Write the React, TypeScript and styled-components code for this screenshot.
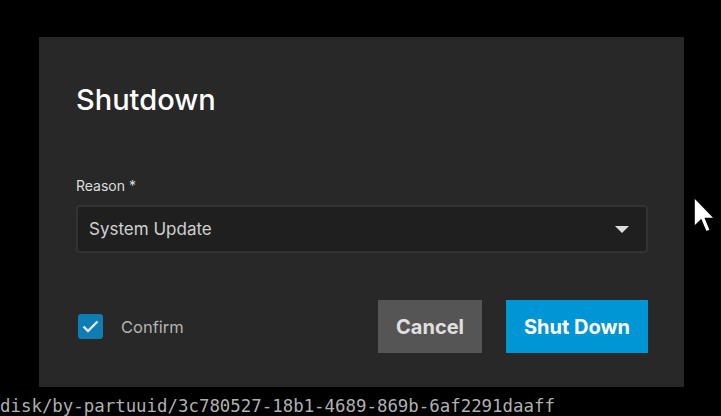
import React from "react";
import styled, { createGlobalStyle } from "styled-components";

const Global = createGlobalStyle`
  html, body { margin: 0; padding: 0; background: #000; }
  body { font-family: Inter, "Noto Sans", sans-serif; overflow: hidden; }
`;

const Screen = styled.div`
  position: relative;
  width: 721px;
  height: 416px;
  background: #000;
  padding: 37px 0 0 39px;
  box-sizing: border-box;
  display: flex;
  flex-direction: column;
`;

const Dialog = styled.div`
  width: 645px;
  height: 350px;
  box-sizing: border-box;
  background: #282828;
  padding: 47px 36px 34px 37px;
  display: flex;
  flex-direction: column;
`;

const Title = styled.h1`
  margin: 0;
  font-size: 29px;
  font-weight: 500;
  color: #fff;
  line-height: 32px;
`;

const Label = styled.div`
  margin-top: 61px;
  font-size: 14px;
  color: #ddd;
  line-height: 18px;
`;

const Select = styled.div`
  margin-top: 10px;
  height: 48px;
  box-sizing: border-box;
  border: 2px solid #333;
  border-radius: 4px;
  background: #1f1f1f;
  display: flex;
  align-items: center;
  justify-content: space-between;
  padding: 0 17px 0 11px;
  font-size: 17px;
  color: #d0d0d0;
`;

const Arrow = styled.span`
  width: 0;
  height: 0;
  border-left: 7px solid transparent;
  border-right: 7px solid transparent;
  border-top: 7px solid #ddd;
`;

const Footer = styled.div`
  margin-top: auto;
  display: flex;
  align-items: center;
  gap: 24px;
`;

const CheckRow = styled.label`
  display: flex;
  align-items: center;
  gap: 18px;
  margin-left: 2px;
  margin-right: auto;
  font-size: 16.5px;
  color: #b4b4b4;
`;

const Box = styled.span`
  width: 25px;
  height: 25px;
  border-radius: 3px;
  background: #0d7db4;
  display: flex;
  align-items: center;
  justify-content: center;
`;

const Button = styled.button<{ $primary?: boolean }>`
  height: 53px;
  border: none;
  border-radius: 0;
  padding: 0 18px;
  font-family: Inter, "Noto Sans", sans-serif;
  font-size: 20px;
  font-weight: 700;
  background: ${(p) => (p.$primary ? "#0095d5" : "#555555")};
  color: ${(p) => (p.$primary ? "#fff" : "#e0e0e0")};
  min-width: ${(p) => (p.$primary ? "142px" : "103px")};
`;

const Console = styled.div`
  margin-top: 9px;
  margin-left: -39px;
  font-family: "DejaVu Sans Mono", monospace;
  font-size: 17.4px;
  line-height: 20px;
  color: #b0b0b0;
  white-space: nowrap;
`;

const Cursor = styled.svg`
  position: absolute;
  left: 692px;
  top: 195px;
`;

export default function App() {
  return (
    <>
      <Global />
      <Screen>
        <Dialog>
          <Title>Shutdown</Title>
          <Label>Reason *</Label>
          <Select>
            <span>System Update</span>
            <Arrow />
          </Select>
          <Footer>
            <CheckRow>
              <Box>
                <svg width="17" height="13" viewBox="0 0 17 13">
                  <path d="M1.5 6.5 L6 11 L15.5 1.5" fill="none" stroke="#e8e8e8" strokeWidth="2.4" />
                </svg>
              </Box>
              Confirm
            </CheckRow>
            <Button>Cancel</Button>
            <Button $primary>Shut Down</Button>
          </Footer>
        </Dialog>
        <Console>disk/by-partuuid/3c780527-18b1-4689-869b-6af2291daaff</Console>
        <Cursor width="26" height="40" viewBox="0 0 13 20">
          <path d="M1 1 L1 16 L4.5 12.6 L7 18.5 L9.2 17.6 L6.8 11.8 L11.5 11.8 Z" fill="#fff" stroke="#000" strokeWidth="0.8" strokeLinejoin="miter" />
        </Cursor>
      </Screen>
    </>
  );
}
